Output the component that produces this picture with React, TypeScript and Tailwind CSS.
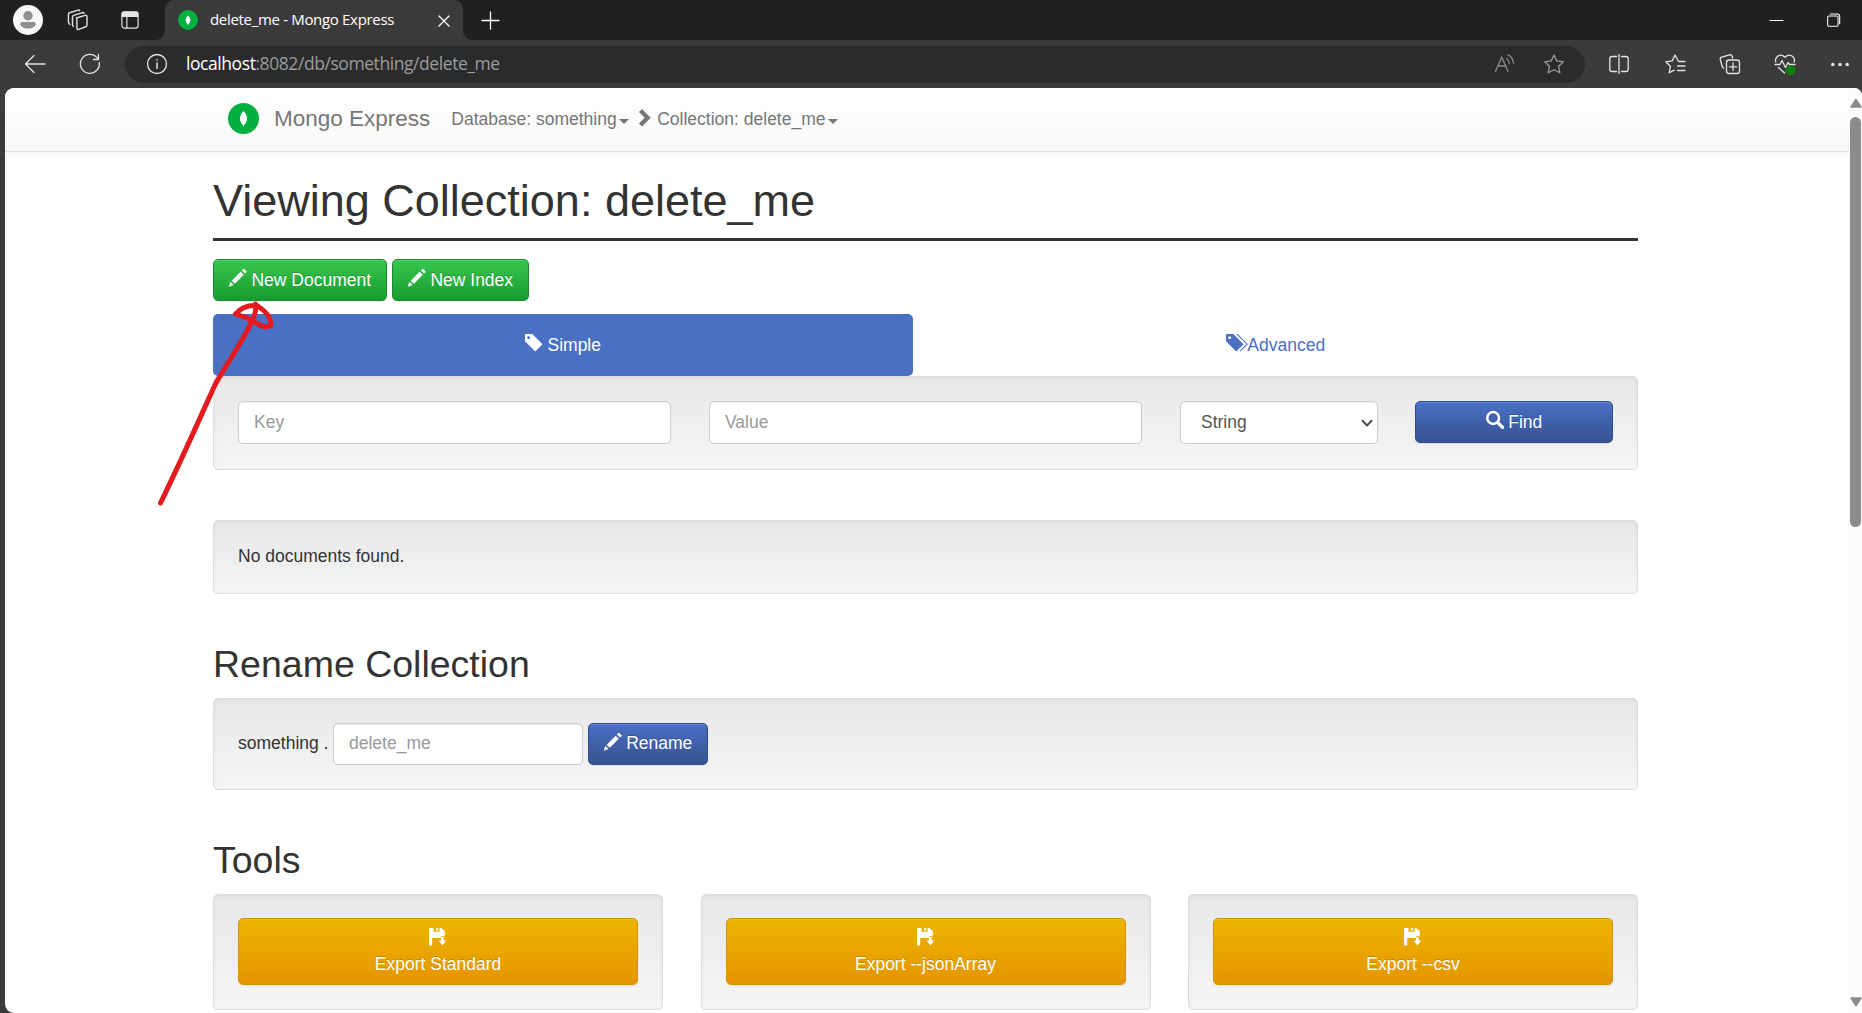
import type { ReactNode } from 'react';

const GLYPHS = {
  pencil:
    'M1011 1210q19 0 33 -13l153 -153q13 -14 13 -33t-13 -33l-99 -92l-214 214l95 96q13 14 32 14zM1013 800l-615 -614l-214 214l614 614zM317 96l-333 -112l110 335z',
  tag: 'M1 700v475q0 10 7.5 17.5t17.5 7.5h474l700 -700l-500 -500zM148 953q0 -42 29 -71q30 -30 71.5 -30t71.5 30q29 29 29 71t-29 71q-30 30 -71.5 30t-71.5 -30q-29 -29 -29 -71z',
  tags: 'M2 700v475q0 11 7 18t18 7h474l700 -700l-500 -500zM148 953q0 -42 30 -71q29 -30 71 -30t71 30q30 29 30 71t-30 71q-29 30 -71 30t-71 -30q-30 -29 -30 -71zM701 1200h100l700 -700l-500 -500l-50 50l450 450z',
  search:
    'M0 720a490 490 0 1 0 980 0a490 490 0 1 0 -980 0zM170 720a320 320 0 1 1 640 0a320 320 0 1 1 -640 0z',
  save: 'M0 1200H310V950H720V1200H830L1080 1000V640H830V510H220V0H0zM490 1200H620V1030H490zM830 560h180v-220h170l-260 -340l-260 340h170z',
  chevron: 'M270 990l210 210l600 -600l-600 -600l-210 210l390 390z',
};

function Glyph({ name, className = '' }: { name: keyof typeof GLYPHS; className?: string }) {
  return (
    <svg viewBox="0 0 1200 1200" className={`inline-block size-[17.5px] shrink-0 overflow-visible ${className}`} fill="currentColor">
      <path transform="matrix(1 0 0 -1 0 1200)" d={GLYPHS[name]} fillRule="evenodd" />
      {name === 'search' && <path d="M800 790l340 330" stroke="currentColor" strokeWidth="220" strokeLinecap="round" />}
    </svg>
  );
}

function Line({ children, className = '', size = 20 }: { children: ReactNode; className?: string; size?: number }) {
  return (
    <svg viewBox="0 0 20 20" width={size} height={size} className={`shrink-0 overflow-visible ${className}`} fill="none" stroke="currentColor" strokeWidth="1.3" strokeLinecap="round" strokeLinejoin="round">
      {children}
    </svg>
  );
}

function Leaf({ className }: { className: string }) {
  return (
    <svg viewBox="0 0 31 31" className={`shrink-0 ${className}`}>
      <circle cx="15.5" cy="15.5" r="15.5" fill="#00b140" />
      <path d="M15.5 8c2.6 3 3.6 5 3.6 7.6 0 2.600-1 4.800-3.100 6.400v1.200h-1V22c-2.100-1.600-3.100-3.800-3.100-6.400C11.900 13 12.900 11 15.500 8z" fill="#fff" />
    </svg>
  );
}

function TabStrip() {
  return (
    <div className="flex h-10 bg-[#3b3b3b] text-white">
      <div className="flex w-[165px] items-center rounded-br-[9px] bg-[#202020] pl-[13px]">
        <svg viewBox="0 0 30 30" className="size-[30px]">
          <circle cx="15" cy="15" r="15" fill="#f7f7f7" />
          <circle cx="15" cy="10.700" r="4.700" fill="#8f8f8f" />
          <path d="M9 17h12a1.700 1.700 0 0 1 1.700 1.700c0 3-3.200 4.800-7.700 4.800s-7.700-1.800-7.700-4.800A1.700 1.700 0 0 1 9 17z" fill="#8f8f8f" />
        </svg>
        <Line size={22} className="ml-[24px] text-[#ddd]">
          <path d="M8.500 8.200 16.500 5.800q1.700-.4 1.700 1.200v7.500q0 1.200-1.200 1.600l-6.300 2.400q-1.700.5-1.700-1.200V9.300q0-.9-.5-1.100z" />
          <path d="M5.700 15.800 5 14.700V7.200q0-1 1-1.400l8-2.500q1-.3 1.500.6M2.500 14 1.300 12.200V4.700q0-1 1-1.300L10 1q1-.3 1.500.6" />
        </Line>
        <Line size={18} className="ml-[32px] text-[#e6e6e6]">
          <rect x="1" y="1" width="18" height="18" rx="3" />
          <path d="M1.500 1.500h17v4.500h-17z" fill="currentColor" />
          <path d="M6.500 6v13" />
        </Line>
      </div>
      <div className="w-[298px] bg-[#202020]">
        <div className="flex h-full items-center rounded-t-[9px] bg-[#3b3b3b] pl-[13px]">
          <Leaf className="size-5" />
          <span className="-mt-[2px] ml-[12px] whitespace-nowrap font-['Open_Sans'] text-[15px] tracking-[-0.32px]">delete_me - Mongo Express</span>
          <Line size={10} className="ml-auto mr-[14px] mt-px overflow-visible">
            <path d="M0 0l20 20M20 0 0 20" strokeWidth="2.600" />
          </Line>
        </div>
      </div>
      <div className="flex flex-1 items-center rounded-bl-[9px] bg-[#202020] pl-[19px]">
        <Line size={17}>
          <path d="M10 0v20M0 10h20" strokeWidth="1.500" />
        </Line>
        <Line size={13} className="ml-auto">
          <path d="M0 10h20" strokeWidth="1.600" />
        </Line>
        <Line size={13} className="ml-[44px] mr-[22px]">
          <rect x="1" y="3" width="16" height="16" rx="2" strokeWidth="1.600" />
          <path d="M5 0h11q3.500 0 3.500 3.500V15" strokeWidth="1.600" />
        </Line>
      </div>
    </div>
  );
}

function Toolbar() {
  return (
    <div className="flex h-12 items-center bg-[#3b3b3b] pl-[25px] text-[#e4e4e4]">
      <Line>
        <path d="M20 10H.5M9 1.500.5 10 9 18.500" />
      </Line>
      <Line className="ml-[35px]">
        <path d="M19.300 8.500A9.500 9.500 0 1 1 16 2.600L18.500 5M18.500.5V5.500h-5" />
      </Line>
      <div className="ml-[25px] flex h-[37px] w-[1460px] items-center rounded-full bg-[#2b2b2b] pl-[22px] pr-[21px]">
        <Line>
          <circle cx="10" cy="10" r="9.500" />
          <path d="M10 9v5.500M10 5.800v.1" strokeWidth="1.500" />
        </Line>
        <span className="-mt-[2px] ml-[19px] whitespace-nowrap font-['Open_Sans'] text-[17.5px] tracking-[-0.43px] text-[#9a9a9a]">
          <span className="text-white">localhost</span>:8082/db/something/delete_me
        </span>
        <Line className="ml-auto text-[#8b8b8b]">
          <path d="M.5 17.500 6.800 3l6.200 14.500M3 12h8M11.500 4.500q2.500 1.500 2.800 5M13 .8q5 2.500 5.500 8.500" />
        </Line>
        <Line className="ml-[29px] text-[#9a9a9a]">
          <path d="m10 1 2.800 5.900 6.500.9-4.700 4.500 1.200 6.500L10 15.700l-5.800 3.100 1.200-6.500L.7 7.800l6.500-.9z" />
        </Line>
      </div>
      <Line className="ml-[24px]">
        <path d="M7.500 2.500H3Q.8 2.500.8 4.700v10.600q0 2.200 2.200 2.200h4.500M12.500 2.500H17q2.200 0 2.200 2.200v10.600q0 2.200-2.200 2.200h-4.500M10 .5v19" />
      </Line>
      <Line className="ml-[36px]">
        <path d="M13.300 7 10 1 7.200 6.900l-6.500.9 4.700 4.500-1.200 6.500 5-2.700M14 7.500h6M12.500 12H20M12.500 16.500H20" />
      </Line>
      <Line className="ml-[35px]">
        <path d="M3.800 14.200Q2.500 13.500 2.100 12L.3 5.700q-.5-2 1.400-2.600L9.500.8q2-.4 2.600 1.400l.5 1.800M9 6h8q2.500 0 2.500 2.500V17q0 2.500-2.500 2.500H9Q6.500 19.500 6.500 17V8.500Q6.500 6 9 6zM13 9v7.500M9.300 12.800h7.500" />
      </Line>
      <Line className="ml-[35px]">
        <path d="M.8 8Q-.3 5 2.300 2.500 6-.5 10 3.200q4-3.700 7.700-.7Q20.300 5 19.200 8M0 10.500h5L7 6.500l3.500 7 2.500-5 1.500 2H20M3.500 13.500 9.500 19" />
        <circle cx="15.500" cy="16.300" r="5" fill="#107c10" stroke="none" />
      </Line>
      <Line size={18} className="ml-[36px]">
        <path d="M2 10.500h.01M10 10.500h.01M18 10.500h.01" strokeWidth="4" />
      </Line>
    </div>
  );
}

function Caret() {
  return <span className="ml-[2px] mt-[3px] inline-block border-x-[5px] border-t-[5px] border-x-transparent border-t-current" />;
}

function Well({ className = '', children }: { className?: string; children: ReactNode }) {
  return (
    <div className={`rounded-[5px] border border-[#dcdcdc] bg-linear-to-b from-[#e8e8e8] to-[#f5f5f5] shadow-[inset_0_1px_4px_rgba(0,0,0,0.05),0_1px_0_#fff] ${className}`}>
      {children}
    </div>
  );
}

const button = 'flex items-center justify-center whitespace-nowrap rounded-[5px] border text-white [text-shadow:0_-1px_0_rgba(0,0,0,0.2)] shadow-[inset_0_1px_0_rgba(255,255,255,0.15),0_1px_1px_rgba(0,0,0,0.075)]';
const green = 'border-[#1c8a35] bg-linear-to-b from-[#38c64f] to-[#149c30]';
const blue = 'border-[#2f4c8c] bg-linear-to-b from-[#4a70c6] to-[#36528f]';
const field = 'flex items-center rounded-[5px] border border-[#ccc] bg-white shadow-[inset_0_1px_1px_rgba(0,0,0,0.075)]';

function ExportCard({ label }: { label: string }) {
  return (
    <Well className="h-[116px] w-[450px] px-[24px] pt-[23px]">
      <div className={`${button} h-[67px] flex-col border-[#d09409] bg-linear-to-b from-[#ebb400] to-[#e69500]`}>
        <Glyph name="save" className="mt-[2px]" />
        <span className="mt-[6px] leading-[25px]">{label}</span>
      </div>
    </Well>
  );
}

function Page() {
  return (
    <div className="min-w-0 flex-1">
      <header className="flex h-[64px] items-center border-b border-[#e2e2e2] bg-linear-to-b from-white to-[#f8f8f8] pl-[223px] text-[#777] shadow-[0_1px_6px_rgba(0,0,0,0.075)]">
        <Leaf className="-mt-[2px] size-[31px]" />
        <span className="-mt-px ml-[15px] text-[22.5px]">Mongo Express</span>
        <span className="ml-[21px] flex items-center">Database: something<Caret /></span>
        <Glyph name="chevron" className="-mt-[4px] ml-[6px]" />
        <span className="ml-[5px] flex items-center">Collection: delete_me<Caret /></span>
      </header>
      <main className="ml-[208px] w-[1425px]">
        <h1 className="h-[86px] pt-[24px] text-[45px] leading-[50px]">Viewing Collection: delete_me</h1>
        <div className="h-[3px] bg-[#333]" />
        <div className="mt-[18px] flex gap-[5px]">
          <div className={`${button} ${green} h-[42px] w-[174px] gap-[5px]`}><Glyph name="pencil" className="-mt-[4px]" />New Document</div>
          <div className={`${button} ${green} h-[42px] w-[137px] gap-[5px]`}><Glyph name="pencil" className="-mt-[4px]" />New Index</div>
        </div>
        <div className="mt-[13px] flex h-[62px]">
          <div className="flex w-[700px] items-center justify-center gap-[5px] rounded-[5px] bg-[#4a70c4] text-white"><Glyph name="tag" className="-mt-[4px]" />Simple</div>
          <div className="flex flex-1 items-center justify-center text-[#4a70c4]"><Glyph name="tags" className="-mt-[4px] mr-[4px]" />Advanced</div>
        </div>
        <Well className="flex h-[94px] items-start px-[24px] pt-[24px]">
          <div className={`${field} h-[43px] w-[433px] pl-[15px] text-[#999]`}>Key</div>
          <div className={`${field} ml-[38px] h-[43px] w-[433px] pl-[15px] text-[#999]`}>Value</div>
          <div className={`${field} ml-[38px] h-[43px] w-[198px] justify-between pl-[20px] pr-[5px] text-[#555]`}>
            String
            <Line size={10} className="text-[#4a4a4a]">
              <path d="M1 5.500 10 15l9-9.500" strokeWidth="3.800" />
            </Line>
          </div>
          <div className={`${button} ${blue} ml-[37px] h-[42px] w-[198px] gap-[5px]`}><Glyph name="search" className="-mt-[4px]" />Find</div>
        </Well>
        <Well className="mt-[50px] h-[74px] px-[24px] pt-[23px] leading-[25px]">No documents found.</Well>
        <h2 className="mt-[50px] h-[54px] text-[37.5px] leading-[41px]">Rename Collection</h2>
        <Well className="flex h-[92px] items-start px-[24px] pt-[24px]">
          <span className="w-[95px] leading-[41px]">something .</span>
          <div className={`${field} h-[42px] w-[250px] pb-px pl-[15px] text-[#999]`}>delete_me</div>
          <div className={`${button} ${blue} ml-[5px] h-[42px] w-[120px] gap-[5px] pb-px`}><Glyph name="pencil" className="-mt-[3px]" />Rename</div>
        </Well>
        <h2 className="mt-[50px] h-[54px] text-[37.5px] leading-[41px]">Tools</h2>
        <div className="flex justify-between">
          <ExportCard label="Export Standard" />
          <ExportCard label="Export --jsonArray" />
          <ExportCard label="Export --csv" />
        </div>
      </main>
    </div>
  );
}

function Scrollbar() {
  return (
    <div className="flex w-[13px] shrink-0 flex-col items-center bg-[#fcfcfc] pb-[6px] pt-[10px]">
      <svg viewBox="0 0 12 10" className="h-[10px] w-[12px]"><path d="M6 1.500 11 9H1z" fill="#8b8b8b" stroke="#8b8b8b" strokeWidth="1.500" strokeLinejoin="round" /></svg>
      <div className="mt-[9px] h-[410px] w-[11px] rounded-full bg-[#8b8b8b]" />
      <svg viewBox="0 0 12 10" className="mt-auto h-[10px] w-[12px]"><path d="M6 8.500 11 1H1z" fill="#8b8b8b" stroke="#8b8b8b" strokeWidth="1.500" strokeLinejoin="round" /></svg>
    </div>
  );
}

export default function App() {
  return (
    <div className="relative h-[1013px] w-[1862px] overflow-hidden bg-[#3b3b3b] font-['Liberation_Sans',sans-serif] text-[17.5px] text-[#333]">
      <TabStrip />
      <Toolbar />
      <div className="ml-[5px] flex h-[925px] overflow-hidden rounded-l-[9px] rounded-tr-[8px] bg-white">
        <Page />
        <Scrollbar />
      </div>
      <svg className="pointer-events-none absolute left-[150px] top-[295px]" width="130" height="215" viewBox="150 295 130 215" fill="none" stroke="#e31b1e" strokeWidth="5" strokeLinecap="round" strokeLinejoin="round">
        <path d="M160.500 503C180 463 196 427 214 387c7-15 37-57 41-74q1.500-5 .5-9" />
        <path d="M257 305.500Q243 304.500 235.500 314L246 317.500 260 325q6 3.500 10.500.5Q273 316 257 305.500" />
      </svg>
    </div>
  );
}
